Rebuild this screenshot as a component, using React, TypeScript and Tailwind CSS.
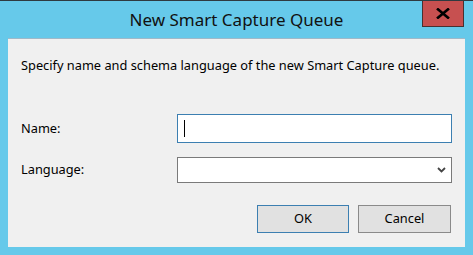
export default function App() {
  const font = { fontFamily: '"Noto Sans", "Open Sans", sans-serif' };
  return (
    <div
      className="relative flex h-[255px] w-[473px] flex-col border-t border-[#2f3a40] bg-[#66c9ea] text-black"
      style={font}
    >
      {/* title bar */}
      <div className="flex h-[37px] items-center justify-center pt-[1px] text-[17px] text-[#111]">
        New Smart Capture Queue
      </div>
      <button className="absolute right-[9px] top-0 flex h-[26px] w-[42px] items-center justify-center border border-t-0 border-[#4a3030] bg-[#c75050]">
        <svg width="14" height="11" viewBox="0 0 14 11">
          <path d="M1 0.5 L13 10.5 M13 0.5 L1 10.5" stroke="#000" strokeWidth="2.6" />
        </svg>
      </button>

      {/* client area */}
      <div className="mx-[8px] mb-[8px] flex flex-1 flex-col border-t border-[#9fb9c9] bg-[#f0f0f0] pl-[13px] pr-[13px] text-[12.8px]">
        <div className="mt-[18px] h-[16px] leading-[16px]">
          Specify name and schema language of the new Smart Capture queue.
        </div>

        <div className="mt-[41px] flex h-[29px] items-center">
          <span className="w-[156px]">Name:</span>
          <div className="flex h-[29px] w-[275px] items-center border border-[#3c7fb1] bg-white pl-[6px]">
            <span className="h-[17px] w-px bg-black" />
          </div>
        </div>

        <div className="mt-[14px] flex h-[26px] items-center">
          <span className="w-[156px]">Language:</span>
          <div className="flex h-[26px] w-[275px] items-center justify-end border border-[#7a7a7a] bg-white pr-[5px]">
            <svg width="9" height="6" viewBox="0 0 9 6">
              <path d="M1 1 L4.5 4.5 L8 1" fill="none" stroke="#444" strokeWidth="1.8" />
            </svg>
          </div>
        </div>

        <div className="mt-[22px] flex justify-end gap-[9px] pr-px">
          <button className="h-[28px] w-[92px] border border-[#3c7fb1] bg-[#e1e1e1] text-[12.8px]">
            OK
          </button>
          <button className="h-[28px] w-[93px] border border-[#8a8a8a] bg-[#e1e1e1] text-[12.8px]">
            Cancel
          </button>
        </div>
      </div>
    </div>
  );
}
